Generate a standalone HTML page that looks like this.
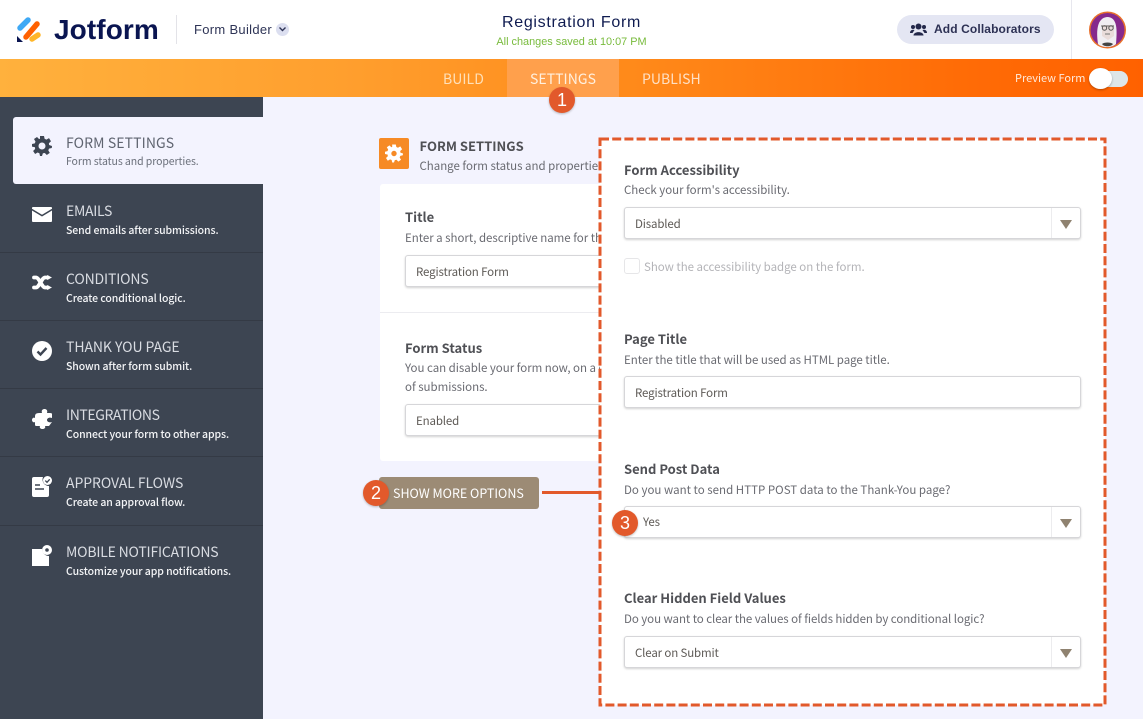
<!DOCTYPE html>
<html><head><meta charset="utf-8"><style>
*{box-sizing:border-box}
html,body{margin:0;padding:0}
body{width:1143px;height:719px;position:relative;overflow:hidden;background:#f3f3fe;font-family:"Noto Sans CJK JP","Liberation Sans",sans-serif;color:#57585f}
.a{position:absolute;white-space:nowrap}
.t{position:absolute;white-space:nowrap;line-height:16px}
.nt{font-size:14px}
.nd{font-size:10.5px;letter-spacing:-.08px;font-weight:500}
.lab{font-size:13px;font-weight:700;color:#4f5055}
.sub{font-size:11.5px;color:#6a6b72;letter-spacing:-.03px}
.inp{position:absolute;background:#fff;border:1px solid #d6d6d9;border-radius:3px;box-shadow:0 1px 2px rgba(0,0,0,.18);height:32px;font-size:11.5px;color:#5e5a56;line-height:32px;padding-left:10px;letter-spacing:-.15px}
.arrow{position:absolute;right:0;top:0;bottom:0;width:29px;border-left:1px solid #ececee}
.arrow:after{content:"";position:absolute;left:8px;top:12px;border-left:6px solid transparent;border-right:6px solid transparent;border-top:9px solid #8f8270}
.bd{position:absolute;width:26px;height:26px;border-radius:50%;background:#e2592b;color:#fff;font:18px/26px "Liberation Sans",sans-serif;text-align:center;box-shadow:0 1px 2px rgba(0,0,0,.25)}
.line{position:absolute;left:0;width:263px;height:1px;background:#343a45}
svg{position:absolute;display:block}
</style></head><body>

<!-- header -->
<div class="a" style="left:0;top:0;width:1143px;height:60px;background:#fff"></div>
<svg style="left:16px;top:16px" width="26" height="28" viewBox="0 0 26 28">
<path d="M4 12 L12 4" stroke="#3fa9f5" stroke-width="5.5" stroke-linecap="round"/>
<path d="M10 21 L21 8" stroke="#ff6100" stroke-width="5.5" stroke-linecap="round"/>
<path d="M16 23 L22 19" stroke="#ffb629" stroke-width="5.5" stroke-linecap="round"/>
<path d="M1 20 V26 H7 Z" fill="#0a1551"/>
</svg>
<div class="a" style="left:54px;top:12px;font:700 28px/36px 'Liberation Sans',sans-serif;color:#0a1551;letter-spacing:.1px">Jotform</div>
<div class="a" style="left:176px;top:15px;width:1px;height:29px;background:#e3e3e8"></div>
<div class="a" style="left:194px;top:21px;font:13px/17px 'Liberation Sans',sans-serif;color:#2e3456;letter-spacing:.3px">Form Builder</div>
<div class="a" style="left:276px;top:23px;width:13px;height:13px;border-radius:50%;background:#dcdff0"></div>
<svg style="left:278px;top:26px" width="9" height="7" viewBox="0 0 9 7"><path d="M1.5 1.5 L4.5 4.5 L7.5 1.5" fill="none" stroke="#2e3456" stroke-width="1.4"/></svg>
<div class="a" style="left:0;top:13px;width:1143px;text-align:center;font:500 16px/20px 'Liberation Sans',sans-serif;color:#0f1b50;letter-spacing:.7px">Registration Form</div>
<div class="a" style="left:0;top:35px;width:1143px;text-align:center;font:10.9px/14px 'Liberation Sans',sans-serif;color:#78bb3c">All changes saved at 10:07 PM</div>
<div class="a" style="left:897px;top:15px;width:157px;height:29px;border-radius:15px;background:#e4e6f3"></div>
<svg style="left:910px;top:23px" width="17" height="13" viewBox="0 0 17 13" fill="#23284a">
<circle cx="8.5" cy="3.5" r="3"/><circle cx="3" cy="4" r="2"/><circle cx="14" cy="4" r="2"/>
<path d="M3.5 12.5 C3.5 8 13.5 8 13.5 12.5Z"/><path d="M0 10 C0 6.5 3.5 6.5 4.5 7 L2.5 10Z"/><path d="M17 10 C17 6.5 13.5 6.5 12.5 7 L14.5 10Z"/>
</svg>
<div class="a" style="left:934px;top:21px;font:700 12px/17px 'Liberation Sans',sans-serif;color:#2d3154;letter-spacing:.12px">Add Collaborators</div>
<div class="a" style="left:1071px;top:0;width:1px;height:60px;background:#e7e7ee"></div>
<svg style="left:1088px;top:11px" width="39" height="38" viewBox="0 0 39 38">
<circle cx="19.5" cy="19" r="18.5" fill="#e8702b"/><circle cx="19.5" cy="19" r="17" fill="#86298c"/>
<path d="M10 33 C8 20 9 7 19 6 C30 6 29 20 28 33 C24 37 14 37 10 33Z" fill="#f0eef2"/>
<path d="M14 14 H26 V25 L20 29 L14 25Z" fill="#e9dcda"/>
<path d="M13 15 H26" stroke="#666" stroke-width="1"/><circle cx="16.5" cy="17" r="2.2" fill="none" stroke="#555"/><circle cx="23" cy="17" r="2.2" fill="none" stroke="#555"/>
<path d="M17 23 H22" stroke="#777"/><path d="M14 33 C16 31 23 31 25 33 C23 36 16 36 14 33Z" fill="#444"/>
</svg>

<!-- orange bar -->
<div class="a" style="left:0;top:59px;width:1143px;height:38px;background:linear-gradient(90deg,#ffb13d 0%,#ff9f2e 30%,#ff8a1a 55%,#ff6b06 85%,#ff6100 100%)"></div>
<div class="a" style="left:507px;top:59px;width:112px;height:38px;background:#ffa04c"></div>
<div class="a" style="left:443px;top:70px;font:14px/18px 'Noto Sans CJK JP',sans-serif;color:#ffe0b8;letter-spacing:.05px">BUILD</div>
<div class="a" style="left:530px;top:70px;font:14px/18px 'Noto Sans CJK JP',sans-serif;color:#fff0df;letter-spacing:.05px">SETTINGS</div>
<div class="a" style="left:642px;top:70px;font:14px/18px 'Noto Sans CJK JP',sans-serif;color:#ffe0c4;letter-spacing:.05px">PUBLISH</div>
<div class="a" style="left:1015px;top:71px;font:11px/15px 'Noto Sans CJK JP',sans-serif;color:#ffeadb">Preview Form</div>
<div class="a" style="left:1092px;top:71px;width:36px;height:16px;border-radius:8px;background:#dde6e8"></div>
<div class="a" style="left:1089px;top:68px;width:23px;height:21px;border-radius:50%;background:#fff;box-shadow:0 1px 2px rgba(0,0,0,.3)"></div>
<div class="bd" style="left:549px;top:87px">1</div>

<!-- sidebar -->
<div class="a" style="left:0;top:97px;width:263px;height:622px;background:#3d4552"></div>
<div class="a" style="left:13px;top:117px;width:250px;height:67px;background:#f3f3fe;border-radius:3px 0 0 3px"></div>
<div class="line" style="top:252px"></div><div class="line" style="top:320px"></div><div class="line" style="top:388px"></div><div class="line" style="top:456px"></div><div class="line" style="top:525px"></div>

<svg style="left:32px;top:136px" width="20" height="20" viewBox="0 0 20 20">
<path fill-rule="evenodd" fill="#3d4552" d="M8 0h4l.6 2.8 1.800.8L17 2.100l2 3.200-2.100 1.900.2 1.800L20 10l-.2 2-2.800.6-.7 1.800 1.500 2.500-3 2.100-2-2-1.900.3L10 20H8l-.6-2.800-1.800-.7-2.500 1.500-2-3 2-2L3 11.200 0 10.600V8l2.800-.6.7-1.800L2 3l3-2 2 2 1-.3zM10 6.500a3.500 3.500 0 1 0 0 7 3.500 3.500 0 0 0 0-7z"/>
</svg>
<div class="t nt" style="left:66px;top:135px;color:#5f6470;letter-spacing:.1px">FORM SETTINGS</div>
<div class="t nd" style="left:66px;top:154px;color:#6b707b;font-weight:400">Form status and properties.</div>

<svg style="left:32px;top:207px" width="20" height="15" viewBox="0 0 20 15"><path fill="#fff" d="M1 0h18a1 1 0 0 1 1 1v.8l-10 6-10-6V1a1 1 0 0 1 1-1z"/><path fill="#fff" d="M0 3.500l10 6 10-6V14a1 1 0 0 1-1 1H1a1 1 0 0 1-1-1z"/></svg>
<div class="t nt" style="left:66px;top:203px;color:#d9dce2;letter-spacing:-.3px">EMAILS</div>
<div class="t nd" style="left:66px;top:223px;color:#f4f5f7">Send emails after submissions.</div>

<svg style="left:32px;top:275px" width="20" height="15" viewBox="0 0 20 15"><path fill="none" stroke="#fff" stroke-width="3.800" stroke-linecap="round" d="M2 2.500h2c3 0 6 10 9 10h3M2 12.500h2c3 0 6-10 9-10h3"/><path fill="#fff" d="M15 0l5 2.500-5 2.500zM15 10l5 2.500-5 2.500z"/></svg>
<div class="t nt" style="left:66px;top:271px;color:#d9dce2;letter-spacing:-.15px">CONDITIONS</div>
<div class="t nd" style="left:66px;top:291px;color:#f4f5f7">Create conditional logic.</div>

<svg style="left:32px;top:341px" width="20" height="20" viewBox="0 0 20 20"><circle cx="10" cy="10" r="10" fill="#fff"/><path d="M5.500 10.500l3 3 6-6.500" fill="none" stroke="#3d4552" stroke-width="2.400"/></svg>
<div class="t nt" style="left:66px;top:339px;color:#d9dce2;letter-spacing:-.07px">THANK YOU PAGE</div>
<div class="t nd" style="left:66px;top:359px;color:#f4f5f7">Shown after form submit.</div>

<svg style="left:32px;top:409px" width="20" height="20" viewBox="0 0 20 20"><path fill="#fff" d="M7 4 H10 C9 1 11 0 12.500 0 C14 0 16 1 15 4 H18 Q20 4 20 5 V9 C17 8 15 9.500 15 11 C15 12.500 17 14 20 13 L17 17 H13 C14 19 12 20 10.500 20 C9 20 7 19 8 17 H5 Q3 17 3 16 V13 C1.500 14 0 12.500 0 11 C0 9.500 1.500 8 3 9 V7 Q3 4 7 4Z"/></svg>
<div class="t nt" style="left:66px;top:407px;color:#d9dce2;letter-spacing:-.4px">INTEGRATIONS</div>
<div class="t nd" style="left:66px;top:427px;color:#f4f5f7">Connect your form to other apps.</div>

<svg style="left:32px;top:476px" width="20" height="22" viewBox="0 0 20 22"><path fill="#fff" d="M2 1h9a6.500 6.500 0 0 0 6 9v9a2 2 0 0 1-2 2H2a2 2 0 0 1-2-2V3a2 2 0 0 1 2-2z"/><path d="M3 9h5M3 13h9" stroke="#3d4552" stroke-width="1.600"/><circle cx="15.500" cy="4.500" r="4.500" fill="#fff"/><path d="M13.300 4.600l1.700 1.700 2.700-3" fill="none" stroke="#3d4552" stroke-width="1.300"/></svg>
<div class="t nt" style="left:66px;top:475px;color:#d9dce2;letter-spacing:-.07px">APPROVAL FLOWS</div>
<div class="t nd" style="left:66px;top:495px;color:#f4f5f7">Create an approval flow.</div>

<svg style="left:32px;top:544px" width="20" height="22" viewBox="0 0 20 22"><path fill="#fff" d="M0 5h10a7 7 0 0 0 7 7v10H0z"/><circle cx="15" cy="6" r="5" fill="#fff"/><circle cx="15" cy="6" r="1.800" fill="#3d4552"/></svg>
<div class="t nt" style="left:66px;top:544px;color:#d9dce2;letter-spacing:-.2px">MOBILE NOTIFICATIONS</div>
<div class="t nd" style="left:66px;top:564px;color:#f4f5f7">Customize your app notifications.</div>

<!-- middle -->
<div class="a" style="left:379px;top:138px;width:30px;height:31px;border-radius:2px;background:#f68a25"></div>
<svg style="left:385px;top:144px" width="18" height="19" viewBox="0 0 20 20">
<path fill-rule="evenodd" fill="#fff" d="M8 0h4l.6 2.800 1.800.8L17 2.100l2 3.200-2.100 1.900.2 1.800L20 10l-.2 2-2.800.6-.7 1.800 1.500 2.500-3 2.100-2-2-1.900.3L10 20H8l-.6-2.800-1.800-.7-2.500 1.500-2-3 2-2L3 11.200 0 10.600V8l2.800-.6.7-1.800L2 3l3-2 2 2 1-.3zM10 7a3 3 0 1 0 0 6 3 3 0 0 0 0-6z"/>
</svg>
<div class="t" style="left:419.500px;top:138px;font-size:13px;font-weight:700;color:#4f5055">FORM SETTINGS</div>
<div class="t sub" style="left:419.500px;top:158px">Change form status and properties.</div>
<div class="a" style="left:380px;top:184px;width:225px;height:277px;background:#fff;border-radius:3px"></div>
<div class="a" style="left:380px;top:312px;width:225px;height:1px;background:#ececf0"></div>
<div class="t lab" style="left:405px;top:209px">Title</div>
<div class="t sub" style="left:405px;top:230px">Enter a short, descriptive name for this form.</div>
<div class="inp" style="left:405px;top:255px;width:240px">Registration Form</div>
<div class="t lab" style="left:405px;top:340px">Form Status</div>
<div class="t sub" style="left:405px;top:360px">You can disable your form now, on a date</div>
<div class="t sub" style="left:405px;top:379px">of submissions.</div>
<div class="inp" style="left:405px;top:404px;width:240px">Enabled</div>

<div class="a" style="left:379px;top:477px;width:160px;height:32px;border-radius:3px;background:#9c8b75;color:#fff;font-size:12.500px;line-height:32px;padding-left:14px">SHOW MORE OPTIONS</div>
<div class="a" style="left:542px;top:491px;width:60px;height:3px;background:#e2592b"></div>
<div class="bd" style="left:363px;top:480px">2</div>

<!-- highlight panel -->
<div class="a" style="left:600px;top:139px;width:505px;height:566px;background:#fff"></div>
<svg style="left:597px;top:136px" width="512" height="572"><rect x="3" y="3" width="505" height="566" fill="none" stroke="#e2592b" stroke-width="3" stroke-dasharray="9 3.200"/></svg>

<div class="t lab" style="left:624px;top:162px">Form Accessibility</div>
<div class="t sub" style="left:624px;top:182px">Check your form's accessibility.</div>
<div class="inp" style="left:624px;top:207px;width:456.500px">Disabled<div class="arrow"></div></div>
<div class="a" style="left:624px;top:258px;width:16px;height:16px;border:1px solid #e6e6e8;border-radius:3px;background:#fff"></div>
<div class="t sub" style="left:644px;top:259px;color:#b4b4b8">Show the accessibility badge on the form.</div>

<div class="t lab" style="left:624px;top:331px">Page Title</div>
<div class="t sub" style="left:624px;top:352px">Enter the title that will be used as HTML page title.</div>
<div class="inp" style="left:624px;top:376px;width:456.500px">Registration Form</div>

<div class="t lab" style="left:624px;top:461px">Send Post Data</div>
<div class="t sub" style="left:624px;top:482px;letter-spacing:.01px">Do you want to send HTTP POST data to the Thank-You page?</div>
<div class="inp" style="left:624px;top:506px;width:456.500px;padding-left:18px;line-height:30px">Yes<div class="arrow"></div></div>
<div class="bd" style="left:612px;top:510px">3</div>

<div class="t lab" style="left:624px;top:590px">Clear Hidden Field Values</div>
<div class="t sub" style="left:624px;top:611px;letter-spacing:-.06px">Do you want to clear the values of fields hidden by conditional logic?</div>
<div class="inp" style="left:624px;top:636px;width:456.500px">Clear on Submit<div class="arrow"></div></div>

</body></html>
